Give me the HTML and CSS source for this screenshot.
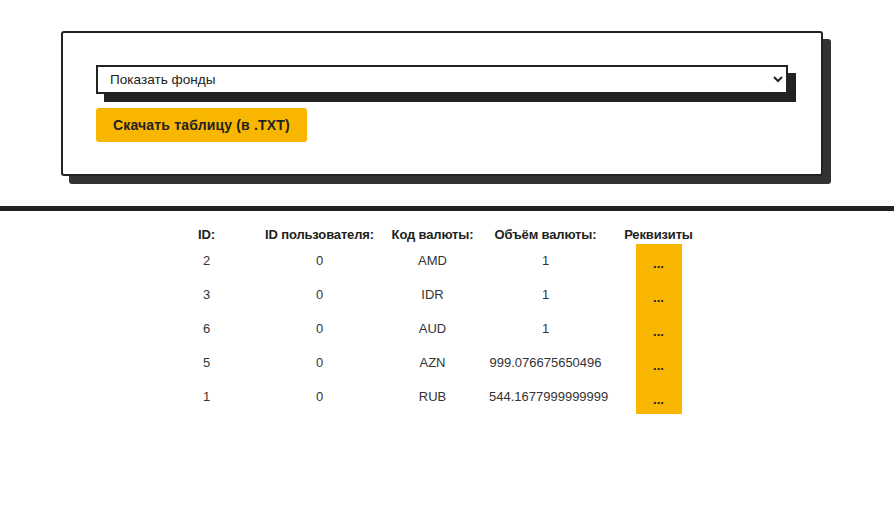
FILE: index.html
```html
<!DOCTYPE html>
<html lang="ru">
<head>
<meta charset="utf-8">
<title>Фонды</title>
<link rel="stylesheet" href="styles.css">
</head>
<body>
<section class="panel">
  <select class="funds-select">
    <option>Показать фонды</option>
  </select>
  <button class="download-btn">Скачать таблицу (в .TXT)</button>
</section>
<hr class="divider">
<table class="funds-table">
  <colgroup>
    <col class="col"><col class="col"><col class="col"><col class="col"><col class="col">
  </colgroup>
  <thead>
    <tr class="head-row">
      <th>ID:</th><th>ID пользователя:</th><th>Код валюты:</th><th>Объём валюты:</th><th>Реквизиты</th>
    </tr>
  </thead>
  <tbody>
    <tr><td>2</td><td>0</td><td>AMD</td><td>1</td><td class="req"><button class="req-btn">...</button></td></tr>
    <tr><td>3</td><td>0</td><td>IDR</td><td>1</td><td class="req"><button class="req-btn">...</button></td></tr>
    <tr><td>6</td><td>0</td><td>AUD</td><td>1</td><td class="req"><button class="req-btn">...</button></td></tr>
    <tr><td>5</td><td>0</td><td>AZN</td><td>999.076675650496</td><td class="req"><button class="req-btn">...</button></td></tr>
    <tr><td>1</td><td>0</td><td>RUB</td><td>544.1677999999999</td><td class="req"><button class="req-btn">...</button></td></tr>
  </tbody>
</table>
</body>
</html>
```
FILE: styles.css
```css
html, body {
  margin: 0;
  padding: 0;
  background: #fff;
}
body {
  font-family: "Liberation Sans", Arial, sans-serif;
  font-size: 13px;
  color: #222;
  padding-top: 31px;
}
.panel {
  box-sizing: border-box;
  width: 762px;
  margin-left: 61px;
  border: 2px solid #222;
  border-radius: 3px;
  box-shadow: 8px 8px 0 #333;
  padding: 32px 33px;
  display: flex;
  flex-direction: column;
  align-items: flex-start;
  gap: 14px;
  background: #fff;
}
.funds-select {
  box-sizing: border-box;
  width: 692px;
  height: 29px;
  border: 2px solid #222;
  border-radius: 0;
  background: #fff;
  box-shadow: 8px 8px 0 #222;
  font-family: "Liberation Sans", Arial, sans-serif;
  font-size: 13.6px;
  color: #222;
  padding: 0 8px;
  outline: none;
}
.download-btn {
  height: 34px;
  padding: 0 17px;
  border: none;
  border-radius: 3px;
  background: #f9b600;
  color: #222;
  font-family: "Liberation Sans", Arial, sans-serif;
  font-size: 14px;
  letter-spacing: 0.17px;
  font-weight: bold;
}
.divider {
  margin: 30px 0 0 0;
  border: none;
  height: 5px;
  background: #222;
}
.funds-table {
  margin: 13px 0 0 150px;
  table-layout: fixed;
  width: 565px;
  border-collapse: collapse;
  border-spacing: 0;
}
.col { width: 113px; }
.funds-table th {
  height: 20px;
  padding: 0;
  font-weight: bold;
  font-size: 13px;
  letter-spacing: -0.15px;
  color: #222;
  text-align: center;
  vertical-align: middle;
  white-space: nowrap;
}
.funds-table td {
  height: 32px;
  padding: 0 0 2px 0;
  text-align: center;
  vertical-align: middle;
  color: #333;
}
.funds-table td.req {
  padding: 0;
}
.req-btn {
  display: block;
  margin: 0 auto;
  width: 46px;
  height: 34px;
  border: none;
  border-radius: 0;
  padding: 4px 0 0 0;
  background: #f9b600;
  color: #222;
  font-family: "Liberation Sans", Arial, sans-serif;
  font-size: 13px;
  font-weight: bold;
}
```
